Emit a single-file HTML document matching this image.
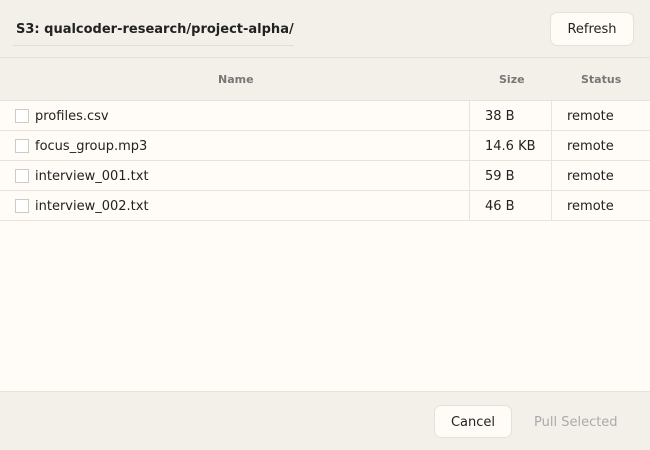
<!DOCTYPE html>
<html><head><style>
*{margin:0;padding:0;box-sizing:border-box}
body{width:650px;height:450px;background:#fffcf7;font-family:"DejaVu Sans","Liberation Sans",sans-serif;font-size:13px;color:#222;position:relative;overflow:hidden}
.hdr{position:absolute;left:0;top:0;width:650px;height:58px;background:#f3f0ea;border-bottom:1px solid #e6e1d8}
.title{position:absolute;left:13px;top:22px;width:281px;height:24px;font-weight:bold;font-size:13px;border-bottom:1px solid #e3ded5;padding-left:3px;white-space:nowrap}
.btn{position:absolute;background:#fffcf7;border:1px solid #e6e1d8;border-radius:7px;text-align:center;font-size:13px;color:#222}
.th{position:absolute;top:58px;left:0;width:650px;height:43px;background:#f3f0ea;border-bottom:1px solid #e6e1d8;font-size:11px;font-weight:bold;color:#777}
.th span{position:absolute;top:15px}
.row{position:absolute;left:0;width:650px;height:30px;border-bottom:1px solid #e9e4db}
.row span{position:absolute;top:8px}
.cb{position:absolute;left:15px;top:8px;width:14px;height:14px;border:1px solid #cfcac2;background:#fff}
.vl{position:absolute;top:101px;height:120px;width:1px;background:#e9e4db}
.ftr{position:absolute;left:0;top:391px;width:650px;height:59px;background:#f3f0ea;border-top:1px solid #e6e1d8}
</style></head><body>
<div class="hdr"><div class="title">S3: qualcoder-research/project-alpha/</div>
<div class="btn" style="left:550px;top:12px;width:84px;height:34px;line-height:33px">Refresh</div></div>
<div class="th"><span style="left:218px">Name</span><span style="left:499px">Size</span><span style="left:581px">Status</span></div>
<div class="row" style="top:101px"><div class="cb"></div><span style="left:35px">profiles.csv</span><span style="left:485px">38 B</span><span style="left:567px">remote</span></div>
<div class="row" style="top:131px"><div class="cb"></div><span style="left:35px">focus_group.mp3</span><span style="left:485px">14.6 KB</span><span style="left:567px">remote</span></div>
<div class="row" style="top:161px"><div class="cb"></div><span style="left:35px">interview_001.txt</span><span style="left:485px">59 B</span><span style="left:567px">remote</span></div>
<div class="row" style="top:191px"><div class="cb"></div><span style="left:35px">interview_002.txt</span><span style="left:485px">46 B</span><span style="left:567px">remote</span></div>
<div class="vl" style="left:469px"></div><div class="vl" style="left:551px"></div>
<div class="ftr">
<div class="btn" style="left:434px;top:13px;width:78px;height:33px;line-height:33px">Cancel</div>
<div style="position:absolute;left:534px;top:23px;color:#aaa">Pull Selected</div></div>
</body></html>
